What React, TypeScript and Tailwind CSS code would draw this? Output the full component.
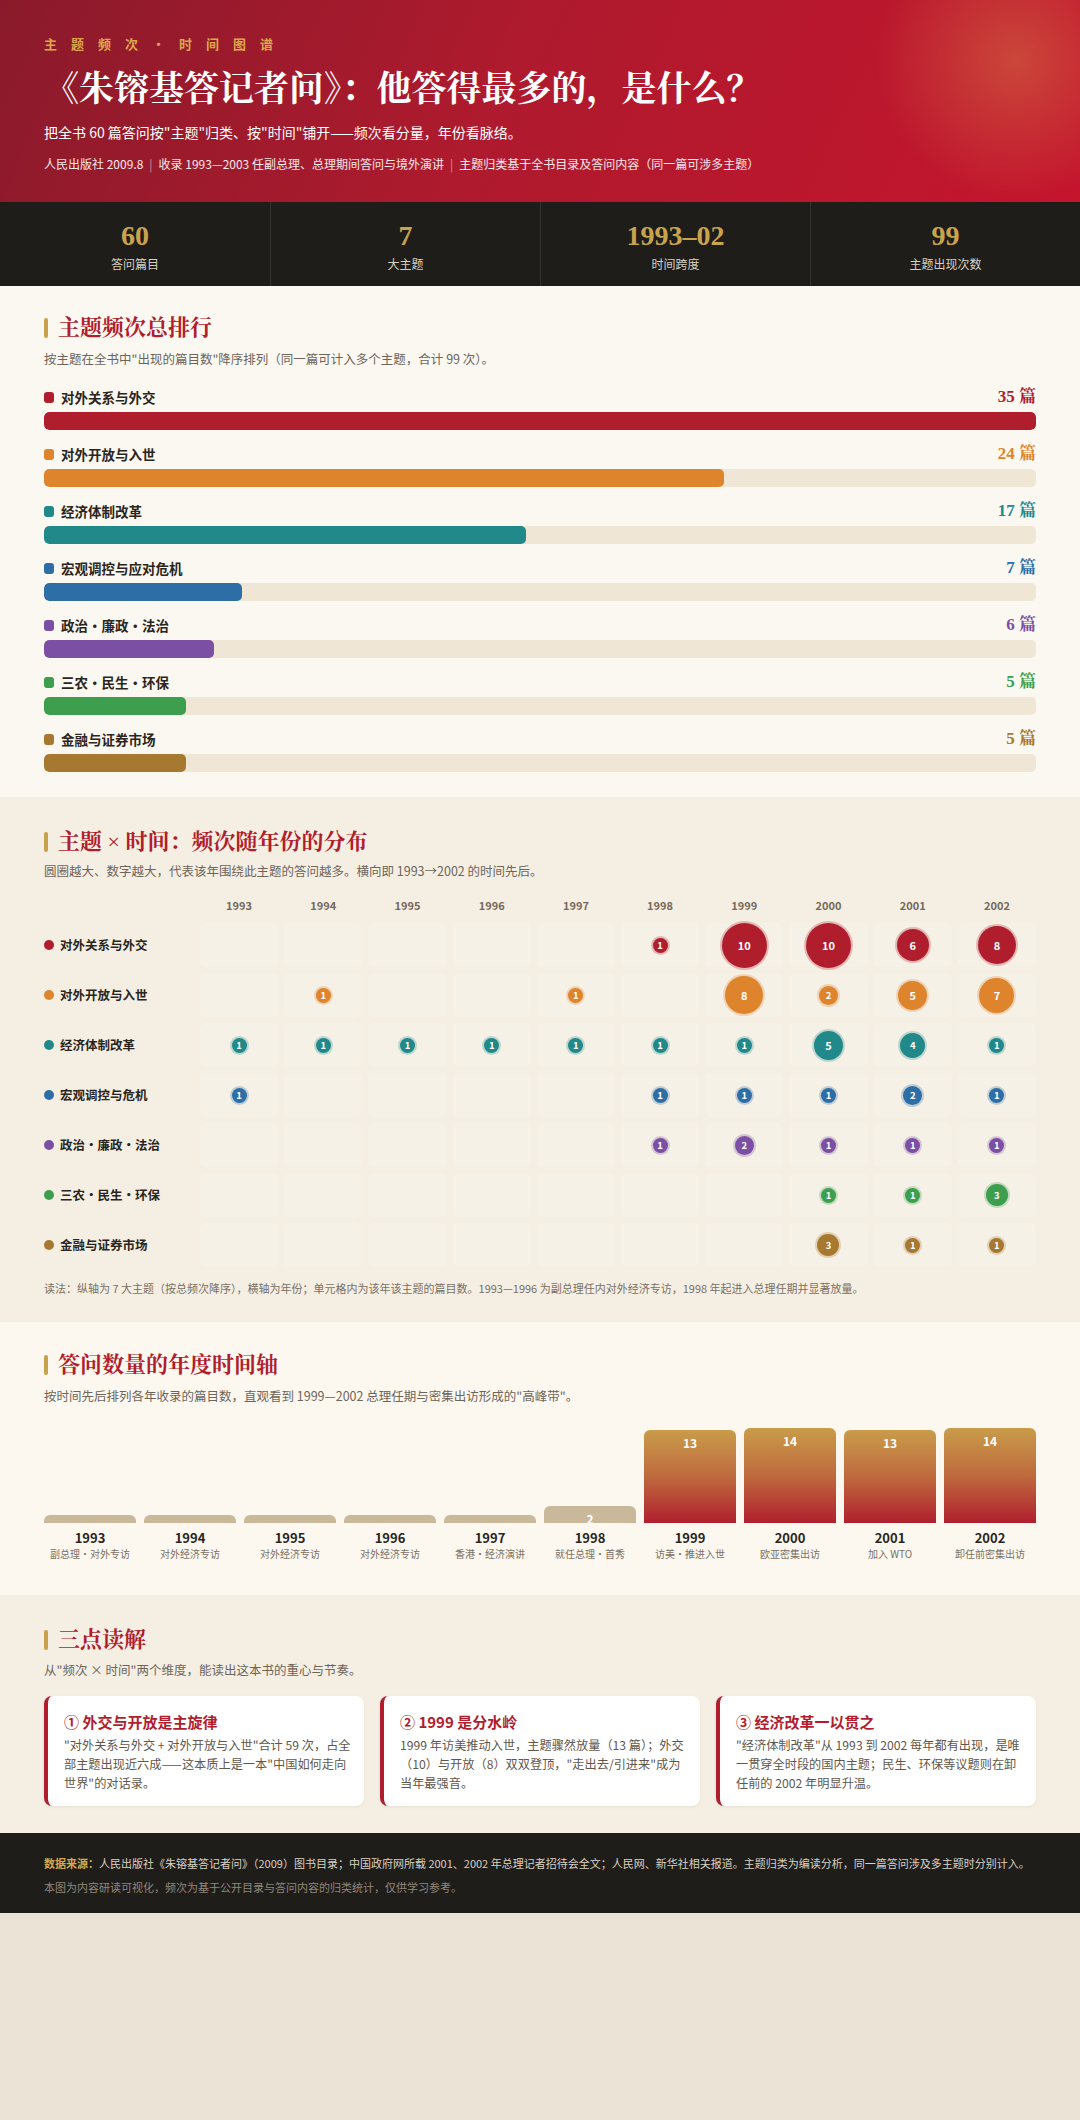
import React from "react"

const SERIF = "font-['Liberation_Serif','Noto_Serif_CJK_SC','Source_Han_Serif_SC','Noto_Sans_CJK_SC',serif]"

// 七大主题及逐年篇目数
const themes = [
  { name: "对外关系与外交", color: "#b01e2e", total: 35, years: { 1998: 1, 1999: 10, 2000: 10, 2001: 6, 2002: 8 } },
  { name: "对外开放与入世", color: "#dd842d", total: 24, years: { 1994: 1, 1997: 1, 1999: 8, 2000: 2, 2001: 5, 2002: 7 } },
  {
    name: "经济体制改革",
    color: "#21898a",
    total: 17,
    years: { 1993: 1, 1994: 1, 1995: 1, 1996: 1, 1997: 1, 1998: 1, 1999: 1, 2000: 5, 2001: 4, 2002: 1 },
  },
  { name: "宏观调控与应对危机", short: "宏观调控与危机", color: "#2e6ea6", total: 7, years: { 1993: 1, 1998: 1, 1999: 1, 2000: 1, 2001: 2, 2002: 1 } },
  { name: "政治・廉政・法治", color: "#7b4fa3", total: 6, years: { 1998: 1, 1999: 2, 2000: 1, 2001: 1, 2002: 1 } },
  { name: "三农・民生・环保", color: "#3d9e4e", total: 5, years: { 2000: 1, 2001: 1, 2002: 3 } },
  { name: "金融与证券市场", color: "#a7782f", total: 5, years: { 2000: 3, 2001: 1, 2002: 1 } },
] as { name: string; short?: string; color: string; total: number; years: Record<number, number> }[]

const yearList = [1993, 1994, 1995, 1996, 1997, 1998, 1999, 2000, 2001, 2002]

const timeline = [
  { year: 1993, n: 1, h: 8, note: "副总理・对外专访" },
  { year: 1994, n: 1, h: 8, note: "对外经济专访" },
  { year: 1995, n: 1, h: 8, note: "对外经济专访" },
  { year: 1996, n: 1, h: 8, note: "对外经济专访" },
  { year: 1997, n: 1, h: 8, note: "香港・经济演讲" },
  { year: 1998, n: 2, h: 17, note: "就任总理・首秀" },
  { year: 1999, n: 13, h: 93, note: "访美・推进入世" },
  { year: 2000, n: 14, h: 95, note: "欧亚密集出访" },
  { year: 2001, n: 13, h: 93, note: "加入 WTO" },
  { year: 2002, n: 14, h: 95, note: "卸任前密集出访" },
]

const stats = [
  { value: "60", label: "答问篇目" },
  { value: "7", label: "大主题" },
  { value: "1993–02", label: "时间跨度" },
  { value: "99", label: "主题出现次数" },
]

const insights = [
  {
    title: "① 外交与开放是主旋律",
    body: "\"对外关系与外交 + 对外开放与入世\"合计 59 次，占全部主题出现近六成——这本质上是一本\"中国如何走向世界\"的对话录。",
  },
  {
    title: "② 1999 是分水岭",
    body: "1999 年访美推动入世，主题骤然放量（13 篇）；外交（10）与开放（8）双双登顶，\"走出去/引进来\"成为当年最强音。",
  },
  {
    title: "③ 经济改革一以贯之",
    body: "\"经济体制改革\"从 1993 到 2002 每年都有出现，是唯一贯穿全时段的国内主题；民生、环保等议题则在卸任前的 2002 年明显升温。",
  },
]

function SectionTitle({ children }: { children: React.ReactNode }) {
  return (
    <div className="flex items-center gap-[10px]">
      <span className="w-[4px] h-[20px] rounded-[2px] bg-[#c9a04c]" />
      <h2 className={`${SERIF} text-[22px] leading-[30px] font-bold text-[#b01e2e]`}>{children}</h2>
    </div>
  )
}

function Bubble({ n, color }: { n: number; color: string }) {
  const d = Math.round(12 + 3.3 * n)
  return (
    <div
      className="rounded-full flex items-center justify-center text-white font-bold"
      style={{
        width: d,
        height: d,
        background: color,
        boxShadow: `0 0 0 2px ${color}44`,
        fontSize: n >= 5 ? 11 : 9.5,
      }}
    >
      {n}
    </div>
  )
}

export default function App() {
  return (
    <div className="min-h-[2120px] bg-[#ebe4d6] font-['Noto_Sans_CJK_SC','Noto_Sans',sans-serif] text-[#2a2520]">
      {/* 头部 */}
      <header className="px-[44px] pt-[34px] pb-[28px] bg-[radial-gradient(140px_circle_at_94%_30%,rgba(214,118,70,0.5),rgba(214,118,70,0)_100%),linear-gradient(115deg,#8a1a2b_0%,#ae1a2e_45%,#c4152d_100%)]">
        <div className="text-[13px] leading-[20px] tracking-[14px] font-bold text-[#dba64c]">主题频次・时间图谱</div>
        <h1 className={`${SERIF} mt-[11px] text-[35px] leading-[50px] font-bold text-white`}>
          《朱镕基答记者问》：他答得最多的，是什么？
        </h1>
        <p className="mt-[5px] text-[14px] leading-[24px] text-white">
          把全书 60 篇答问按"主题"归类、按"时间"铺开——频次看分量，年份看脉络。
        </p>
        <p className="mt-[10px] text-[12px] leading-[20px] text-white/90">
          人民出版社 2009.8<span className="mx-[6px] text-white/50">|</span>收录 1993—2003 任副总理、总理期间答问与境外演讲
          <span className="mx-[6px] text-white/50">|</span>主题归类基于全书目录及答问内容（同一篇可涉多主题）
        </p>
      </header>

      {/* 数据概览 */}
      <div className="grid grid-cols-4 bg-[#1f1d1a]">
        {stats.map((s, i) => (
          <div
            key={s.label}
            className={`h-[84px] pt-[17px] flex flex-col items-center ${i > 0 ? "border-l border-[#36322c]" : ""}`}
          >
            <div className={`${SERIF} text-[28px] leading-[34px] font-bold text-[#c9a44e]`}>{s.value}</div>
            <div className="mt-[2px] text-[12px] leading-[18px] text-[#d8d0c2]">{s.label}</div>
          </div>
        ))}
      </div>

      {/* 主题频次总排行 */}
      <section className="bg-[#fbf8f1] px-[44px] pt-[27px] pb-[25px]">
        <SectionTitle>主题频次总排行</SectionTitle>
        <p className="mt-[6px] text-[12.5px] leading-[20px] text-[#6d655a]">
          按主题在全书中"出现的篇目数"降序排列（同一篇可计入多个主题，合计 99 次）。
        </p>
        <div className="mt-[17px] flex flex-col gap-[13px]">
          {themes.map((t) => (
            <div key={t.name}>
              <div className="flex items-center justify-between h-[22px]">
                <div className="flex items-center gap-[7px]">
                  <span className="w-[10px] h-[11px] rounded-[3px]" style={{ background: t.color }} />
                  <span className="text-[13.5px] font-bold text-[#2a2520]">{t.name}</span>
                </div>
                <span className={`${SERIF} text-[17px] font-bold`} style={{ color: t.color }}>
                  {t.total} 篇
                </span>
              </div>
              <div className="mt-[4px] h-[18px] rounded-[5px] bg-[#efe6d6] overflow-hidden">
                <div className="h-full rounded-[5px]" style={{ width: `${(t.total / 35) * 100}%`, background: t.color }} />
              </div>
            </div>
          ))}
        </div>
      </section>

      {/* 主题 × 时间 */}
      <section className="bg-[#f5efe3] px-[44px] pt-[30px] pb-[25px]">
        <SectionTitle>
          主题 <span className="font-normal">×</span> 时间：频次随年份的分布
        </SectionTitle>
        <p className="mt-[4px] text-[12.5px] leading-[20px] text-[#6d655a]">
          圆圈越大、数字越大，代表该年围绕此主题的答问越多。横向即 1993→2002 的时间先后。
        </p>
        <div className="mt-[16px] grid grid-cols-[150px_repeat(10,minmax(0,1fr))] gap-x-[6px]">
          <div />
          {yearList.map((y) => (
            <div key={y} className="text-center text-[11px] leading-[16px] font-bold text-[#75695c]">
              {y}
            </div>
          ))}
        </div>
        <div className="mt-[10px] grid grid-cols-[150px_repeat(10,minmax(0,1fr))] gap-x-[6px] gap-y-[6px]">
          {themes.map((t) => (
            <React.Fragment key={t.name}>
              <div className="h-[44px] flex items-center gap-[6px]">
                <span className="w-[10px] h-[10px] rounded-full" style={{ background: t.color }} />
                <span className="text-[12.5px] font-bold text-[#2a2520]">{t.short ?? t.name}</span>
              </div>
              {yearList.map((y) => (
                <div key={y} className="h-[44px] rounded-[6px] bg-[#f8f3ea]/50 flex items-center justify-center">
                  {t.years[y] ? <Bubble n={t.years[y]} color={t.color} /> : null}
                </div>
              ))}
            </React.Fragment>
          ))}
        </div>
        <p className="mt-[12px] text-[11px] leading-[18px] text-[#7a7064]">
          读法：纵轴为 7 大主题（按总频次降序），横轴为年份；单元格内为该年该主题的篇目数。1993—1996
          为副总理任内对外经济专访，1998 年起进入总理任期并显著放量。
        </p>
      </section>

      {/* 年度时间轴 */}
      <section className="bg-[#fcf8f0] px-[44px] pt-[28px] pb-[34px]">
        <SectionTitle>答问数量的年度时间轴</SectionTitle>
        <p className="mt-[6px] text-[12.5px] leading-[20px] text-[#6d655a]">
          按时间先后排列各年收录的篇目数，直观看到 1999—2002 总理任期与密集出访形成的"高峰带"。
        </p>
        <div className="mt-[22px] grid grid-cols-10 gap-x-[8px]">
          {timeline.map((b) => (
            <div key={b.year} className="flex flex-col">
              <div className="h-[95px] flex items-end">
                <div
                  className={`w-full rounded-t-[6px] overflow-hidden text-center text-white text-[12px] font-bold leading-[16px] pt-[5px] ${
                    b.n >= 10
                      ? "bg-[linear-gradient(180deg,#c99c4a_0%,#bf6a3e_50%,#b01f2e_100%)]"
                      : "bg-[#c9b899]"
                  }`}
                  style={{ height: b.h }}
                >
                  {b.n > 1 ? b.n : null}
                </div>
              </div>
              <div className="mt-[6px] text-center text-[13px] leading-[18px] font-bold text-[#2a2520]">{b.year}</div>
              <div className="text-center text-[10px] leading-[14px] text-[#7a7064]">{b.note}</div>
            </div>
          ))}
        </div>
      </section>

      {/* 三点读解 */}
      <section className="bg-[#f5efe3] px-[44px] pt-[30px] pb-[27px]">
        <SectionTitle>三点读解</SectionTitle>
        <p className="mt-[5px] text-[12.5px] leading-[20px] text-[#6d655a]">
          从"频次 × 时间"两个维度，能读出这本书的重心与节奏。
        </p>
        <div className="mt-[16px] grid grid-cols-3 gap-[16px]">
          {insights.map((c) => (
            <div
              key={c.title}
              className="bg-white rounded-[8px] border-l-4 border-[#b01e2e] pl-[16px] pr-[10px] pt-[15px] pb-[13px] shadow-[0_1px_3px_rgba(80,60,30,0.08)]"
            >
              <div className="text-[15px] leading-[22px] font-bold text-[#b01e2e]">{c.title}</div>
              <p className="mt-[3px] text-[12.2px] leading-[19px] text-[#5f574c]">{c.body}</p>
            </div>
          ))}
        </div>
      </section>

      {/* 数据来源 */}
      <footer className="bg-[#1f1d1a] px-[44px] pt-[21px] pb-[18px]">
        <p className="text-[11px] leading-[18px] text-[#d8d0c2] whitespace-nowrap">
          <span className="font-bold text-[#d9a54a]">数据来源：</span>
          人民出版社《朱镕基答记者问》（2009）图书目录；中国政府网所载 2001、2002 年总理记者招待会全文；人民网、新华社相关报道。主题归类为编读分析，同一篇答问涉及多主题时分别计入。
        </p>
        <p className="mt-[7px] text-[11px] leading-[16px] text-[#8f877a]">
          本图为内容研读可视化，频次为基于公开目录与答问内容的归类统计，仅供学习参考。
        </p>
      </footer>
    </div>
  )
}
